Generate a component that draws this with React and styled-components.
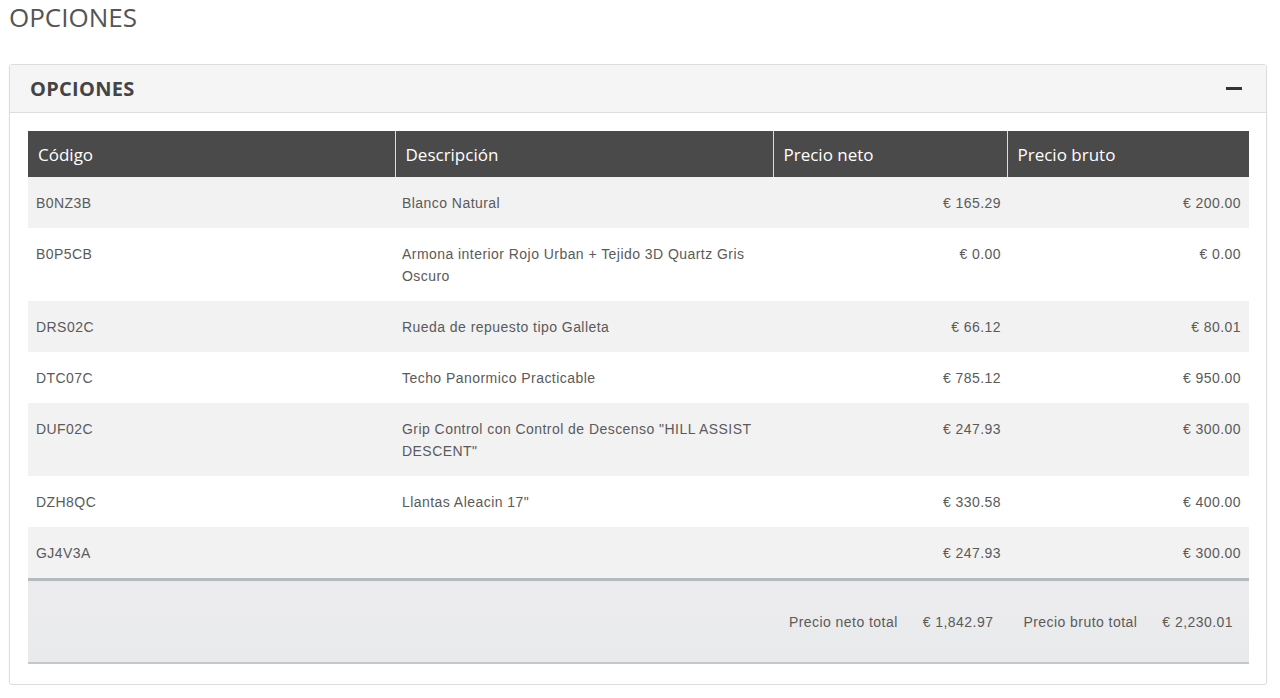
import React from 'react'
import styled, { createGlobalStyle } from 'styled-components'

const Global = createGlobalStyle`
  body {
    margin: 0;
    background: #fff;
    font-family: "Open Sans", "Liberation Sans", sans-serif;
  }
`

const Page = styled.div`
  padding: 0 13px 0 9px;
`

const PageTitle = styled.h1`
  margin: 0 0 30px 0;
  font-size: 26px;
  font-weight: 400;
  line-height: 34px;
  color: #555;
`

const Panel = styled.div`
  border: 1px solid #ddd;
  border-radius: 3px;
  box-shadow: 0 1px 2px rgba(0, 0, 0, 0.05);
`

const PanelHead = styled.div`
  display: flex;
  align-items: center;
  justify-content: space-between;
  height: 47px;
  padding: 0 24px 0 20px;
  background: #f5f5f5;
  border-bottom: 1px solid #ddd;
`

const PanelTitle = styled.h2`
  margin: 0;
  font-size: 20px;
  font-weight: 700;
  color: #444;
  letter-spacing: 0.3px;
`

const Minus = styled.span`
  display: block;
  width: 16px;
  height: 3px;
  background: #333;
`

const PanelBody = styled.div`
  padding: 18px 17px 20px 18px;
`

const Table = styled.table`
  width: 100%;
  table-layout: fixed;
  border-collapse: collapse;
  font-family: "Liberation Sans", Arial, sans-serif;
  font-size: 14px;
  letter-spacing: 0.45px;
  color: #5a5a5a;
`

const Col = styled.col`
  width: ${p => p.$w}px;
`

const Th = styled.th`
  height: 46px;
  padding: 0 10px;
  background: #4a4a4a;
  color: #fff;
  font-family: "Open Sans", "Liberation Sans", sans-serif;
  font-size: 17px;
  font-weight: 400;
  letter-spacing: 0;
  text-align: left;
  border-left: ${p => (p.$first ? 'none' : '1px solid #ddd')};
`

const Tr = styled.tr`
  background: ${p => (p.$odd ? '#f2f2f2' : '#fff')};
`

const Td = styled.td`
  vertical-align: top;
  padding: 15px ${p => p.$pr || 7}px 14px ${p => (p.$first ? 8 : 7)}px;
  line-height: 22px;
  text-align: ${p => (p.$right ? 'right' : 'left')};
`

const FootRow = styled.tr`
  background: linear-gradient(#ececee, #e9eaec);
  border-top: 3px solid #b3bbbf;
  border-bottom: 2px solid #c4c8cb;
`

const FootCell = styled.td`
  height: 81px;
  padding: 0 16px 0 0;
`

const Totals = styled.div`
  display: flex;
  justify-content: flex-end;
  align-items: center;
  gap: 25px;
`

const TotalLabel = styled.span`
  margin-left: ${p => p.$gap || 0}px;
`

const rows = [
  ['B0NZ3B', 'Blanco Natural', '€ 165.29', '€ 200.00'],
  ['B0P5CB', 'Armona interior Rojo Urban + Tejido 3D Quartz Gris Oscuro', '€ 0.00', '€ 0.00'],
  ['DRS02C', 'Rueda de repuesto tipo Galleta', '€ 66.12', '€ 80.01'],
  ['DTC07C', 'Techo Panormico Practicable', '€ 785.12', '€ 950.00'],
  ['DUF02C', 'Grip Control con Control de Descenso "HILL ASSIST DESCENT"', '€ 247.93', '€ 300.00'],
  ['DZH8QC', 'Llantas Aleacin 17"', '€ 330.58', '€ 400.00'],
  ['GJ4V3A', '', '€ 247.93', '€ 300.00'],
]

const App = () => {
  return (
    <>
      <Global />
      <Page>
        <PageTitle>OPCIONES</PageTitle>
        <Panel>
          <PanelHead>
            <PanelTitle>OPCIONES</PanelTitle>
            <Minus />
          </PanelHead>
          <PanelBody>
            <Table>
              <colgroup>
                <Col $w={367} />
                <Col $w={378} />
                <Col $w={234} />
                <Col $w={242} />
              </colgroup>
              <thead>
                <tr>
                  <Th $first>Código</Th>
                  <Th>Descripción</Th>
                  <Th>Precio neto</Th>
                  <Th>Precio bruto</Th>
                </tr>
              </thead>
              <tbody>
                {rows.map((r, i) => (
                  <Tr key={r[0]} $odd={i % 2 === 0}>
                    <Td $first>{r[0]}</Td>
                    <Td $pr={16}>{r[1]}</Td>
                    <Td $right $pr={6}>{r[2]}</Td>
                    <Td $right $pr={8}>{r[3]}</Td>
                  </Tr>
                ))}
              </tbody>
              <tfoot>
                <FootRow>
                  <FootCell colSpan={4}>
                    <Totals>
                      <TotalLabel>Precio neto total</TotalLabel>
                      <span>€ 1,842.97</span>
                      <TotalLabel $gap={5}>Precio bruto total</TotalLabel>
                      <span>€ 2,230.01</span>
                    </Totals>
                  </FootCell>
                </FootRow>
              </tfoot>
            </Table>
          </PanelBody>
        </Panel>
      </Page>
    </>
  )
}

export default App
